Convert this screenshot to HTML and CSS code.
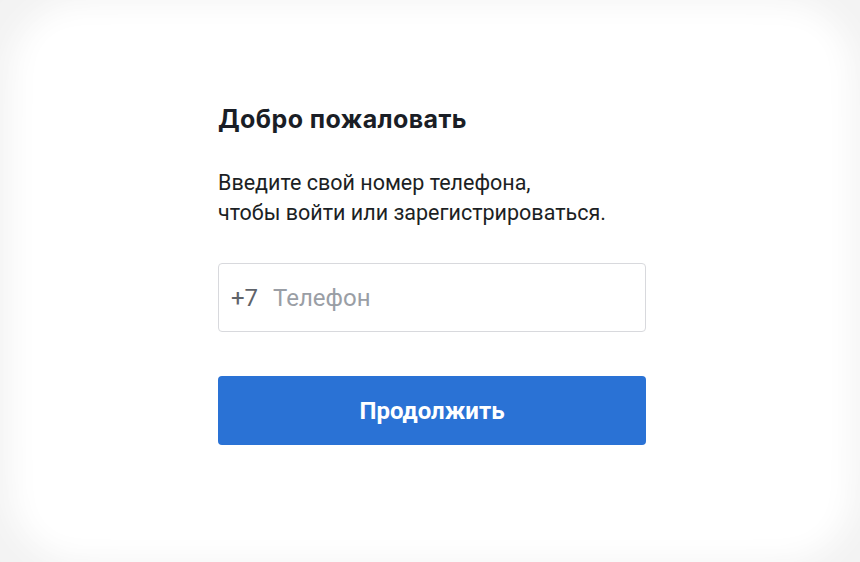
FILE: index.html
```html
<!DOCTYPE html>
<html lang="ru">
<head>
<meta charset="utf-8">
<link rel="stylesheet" href="styles.css">
</head>
<body>
<div class="page">
  <div class="card">
    <form class="form">
      <h1 class="title">Добро пожаловать</h1>
      <p class="lead">Введите свой номер телефона,<br>чтобы войти или зарегистрироваться.</p>
      <label class="phone">
        <span class="prefix">+7</span>
        <input class="phone-input" type="tel" placeholder="Телефон">
      </label>
      <button class="submit" type="button">Продолжить</button>
    </form>
  </div>
</div>
</body>
</html>
```
FILE: styles.css
```css
html, body {
  margin: 0;
  height: 100%;
  background: #f2f2f2;
}
.page {
  box-sizing: border-box;
  height: 100%;
  padding: 30px 34px 28px 38px;
  display: flex;
}
.card {
  flex: 1;
  background: #fff;
  border-radius: 40px;
  box-shadow: 0 0 30px 22px #fff, 0 0 70px 26px rgba(255,255,255,0.7);
  display: flex;
  justify-content: center;
}
.form {
  width: 428px;
  padding-top: 74px;
  font-family: Roboto, "Liberation Sans", sans-serif;
}
.title {
  margin: 0;
  font-family: Inter, "Open Sans", sans-serif;
  font-weight: 700;
  font-size: 25px;
  line-height: 30px;
  letter-spacing: 0.4px;
  color: #1a1e26;
}
.lead {
  margin: 34px 0 0;
  font-size: 21.5px;
  line-height: 30px;
  color: #1c1f24;
}
.phone {
  margin-top: 35px;
  box-sizing: border-box;
  height: 69px;
  border: 1px solid #d8d9dd;
  border-radius: 4px;
  display: flex;
  align-items: center;
  padding: 0 12px;
  gap: 15px;
}
.prefix {
  font-size: 24px;
  color: #5f636a;
}
.phone-input {
  flex: 1;
  min-width: 0;
  border: 0;
  outline: 0;
  padding: 0;
  font-family: Roboto, "Liberation Sans", sans-serif;
  font-size: 24px;
  color: #1c1f24;
  background: transparent;
}
.phone-input::placeholder {
  color: #9a9ea5;
}
.submit {
  margin-top: 44px;
  width: 100%;
  height: 69px;
  border: 0;
  border-radius: 4px;
  background: #2a72d5;
  color: #fff;
  font-family: Roboto, "Liberation Sans", sans-serif;
  font-weight: 700;
  font-size: 24px;
  cursor: pointer;
}
```
